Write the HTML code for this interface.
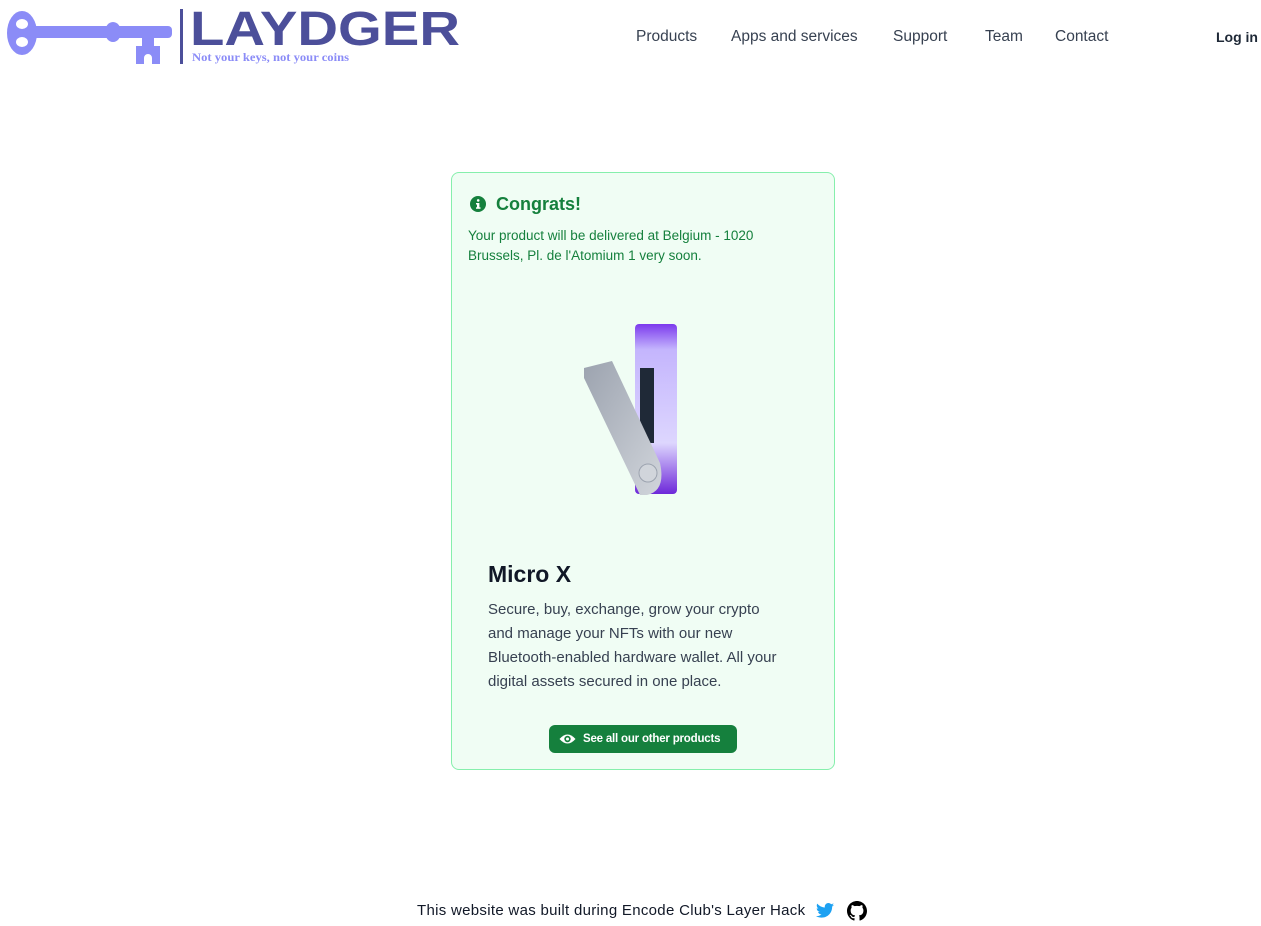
<!DOCTYPE html>
<html><head><meta charset="utf-8">
<style>
*{margin:0;padding:0;box-sizing:border-box}
body{width:1261px;height:926px;background:#fff;font-family:"Liberation Sans",sans-serif;position:relative;overflow:hidden;color:#111827}
.nav a{position:absolute;top:28px;font-size:15.5px;color:#374151;text-decoration:none}
.card{position:absolute;left:451px;top:172px;width:384px;height:598px;border:1px solid #86efac;border-radius:8px;background:#f0fdf4}
</style></head><body>
<svg style="position:absolute;left:0;top:0" width="470" height="70">
 <g fill="#8b8cf7">
  <ellipse cx="22" cy="33" rx="15" ry="22"/>
  <rect x="30" y="26" width="142" height="12" rx="4"/>
  <ellipse cx="113" cy="32" rx="8" ry="10"/>
  <path d="M136 32 h24 v4 h-6 v10 h6 v18 h-8 v-6 a4 4 0 0 0 -8 0 v6 h-8 v-18 h6 v-10 h-6z"/>
 </g>
 <ellipse cx="22" cy="24" rx="6" ry="5" fill="#fff"/>
 <ellipse cx="22" cy="42" rx="6" ry="5" fill="#fff"/>
 <rect x="180" y="9" width="3" height="55" fill="#4c4f9a"/>
 <text x="190" y="45" font-family="Liberation Sans,sans-serif" font-weight="bold" font-size="48" fill="#4c4f9a" textLength="270" lengthAdjust="spacingAndGlyphs">LAYDGER</text>
 <text x="192" y="61" font-family="Liberation Serif,serif" font-weight="bold" font-size="12" fill="#8b8cf7" textLength="157" lengthAdjust="spacingAndGlyphs">Not your keys, not your coins</text>
</svg>
<div class="nav">
 <a style="left:636px">Products</a>
 <a style="left:731px">Apps and services</a>
 <a style="left:893px">Support</a>
 <a style="left:985px">Team</a>
 <a style="left:1055px">Contact</a>
 <a style="left:1216px;font-size:14px;font-weight:bold;color:#1f2937;top:29px">Log in</a>
</div>
<div class="card">
 <svg style="position:absolute;left:17px;top:22px" width="18" height="18" viewBox="0 0 18 18"><circle cx="9" cy="9" r="8" fill="#15803d"/><rect x="8" y="8" width="2.4" height="5.5" fill="#fff"/><rect x="7" y="8" width="2" height="1.5" fill="#fff"/><rect x="7" y="12.3" width="4.5" height="1.5" fill="#fff"/><circle cx="9.2" cy="5.4" r="1.3" fill="#fff"/></svg>
 <div style="position:absolute;left:44px;top:21px;font-size:18px;font-weight:bold;color:#15803d">Congrats!</div>
 <div style="position:absolute;left:16px;top:53px;width:330px;font-size:13.5px;line-height:20px;color:#15803d">Your product will be delivered at Belgium - 1020<br>Brussels, Pl. de l'Atomium 1 very soon.</div>
 <svg style="position:absolute;left:110px;top:140px" width="160" height="200">
  <defs>
   <linearGradient id="p" x1="0" y1="0" x2="0" y2="1"><stop offset="0" stop-color="#7c3aed"/><stop offset=".15" stop-color="#c4b5fd"/><stop offset=".7" stop-color="#ddd6fe"/><stop offset="1" stop-color="#6d28d9"/></linearGradient>
   <linearGradient id="g" x1="0" y1="0" x2="1" y2="1"><stop offset="0" stop-color="#9ca3af"/><stop offset="1" stop-color="#d1d5db"/></linearGradient>
  </defs>
  <rect x="73" y="11" width="42" height="170" rx="4" fill="url(#p)"/>
  <rect x="78" y="55" width="14" height="75" fill="#1f2937"/>
  <path d="M22 55 L50 48 L98 150 Q104 178 85 182 L78 182 L22 65Z" fill="url(#g)"/>
  <circle cx="86" cy="160" r="9" fill="#d1d5db" stroke="#9ca3af"/>
 </svg>
 <div style="position:absolute;left:36px;top:388px;font-size:23px;font-weight:bold;color:#111827">Micro X</div>
 <div style="position:absolute;left:36px;top:425px;width:340px;font-size:15px;line-height:24px;color:#374151">Secure, buy, exchange, grow your crypto<br>and manage your NFTs with our new<br>Bluetooth-enabled hardware wallet. All your<br>digital assets secured in one place.</div>
 <div style="position:absolute;left:97px;top:552px;width:188px;height:28px;background:#15803d;border-radius:6px;color:#fff;font-size:11.5px;font-weight:bold;line-height:28px;padding-left:34px;letter-spacing:-0.2px">See all our other products
  <svg style="position:absolute;left:10px;top:8px" width="17" height="12" viewBox="0 0 17 12"><path d="M0.5 6 Q8.5 -3 16.5 6 Q8.5 15 0.5 6Z" fill="#fff"/><circle cx="8.5" cy="6" r="3.2" fill="#15803d"/><circle cx="8.5" cy="6" r="1.5" fill="#fff"/></svg>
 </div>
</div>
<div style="position:absolute;left:417px;top:902px;font-size:15px;color:#111827;letter-spacing:0.3px">This website was built during Encode Club's Layer Hack</div>
<svg style="position:absolute;left:816px;top:903px" width="18" height="15" viewBox="0 0 24 20"><path d="M24 2.4c-.9.4-1.8.7-2.8.8 1-.6 1.8-1.6 2.2-2.7-1 .6-2 1-3.1 1.2C19.3.7 18 0 16.6 0c-2.7 0-4.9 2.2-4.9 4.9 0 .4 0 .8.1 1.1C7.700 5.8 4.1 3.9 1.7.9c-.4.7-.7 1.6-.7 2.5 0 1.7.9 3.2 2.2 4.1-.8 0-1.6-.2-2.2-.6v.1c0 2.4 1.7 4.4 3.9 4.8-.4.1-.8.2-1.3.2-.3 0-.6 0-.9-.1.6 2 2.4 3.4 4.6 3.4-1.7 1.3-3.8 2.1-6.1 2.1-.4 0-.8 0-1.2-.1 2.2 1.4 4.8 2.2 7.5 2.2 9.1 0 14-7.5 14-14v-.6c1-.7 1.8-1.6 2.5-2.5z" fill="#1da1f2"/></svg>
<svg style="position:absolute;left:847px;top:901px" width="20" height="20" viewBox="0 0 16 16"><path fill="#000" d="M8 0C3.58 0 0 3.58 0 8c0 3.54 2.29 6.53 5.470 7.59.4.07.55-.17.55-.38 0-.19-.01-.82-.01-1.49-2.01.37-2.53-.49-2.69-.94-.09-.23-.48-.94-.82-1.13-.28-.15-.68-.52-.01-.53.63-.01 1.08.58 1.23.82.72 1.21 1.87.87 2.33.66.07-.52.28-.87.51-1.07-1.78-.2-3.64-.89-3.64-3.95 0-.87.31-1.59.82-2.15-.08-.2-.36-1.020.08-2.12 0 0 .67-.21 2.2.82.64-.18 1.32-.27 2-.27.68 0 1.36.09 2 .27 1.53-1.04 2.2-.82 2.2-.82.44 1.1.16 1.92.08 2.12.51.56.82 1.27.82 2.15 0 3.07-1.87 3.75-3.65 3.95.29.25.54.73.54 1.48 0 1.07-.01 1.93-.01 2.2 0 .21.15.46.55.38A8.013 8.013 0 0016 8c0-4.42-3.58-8-8-8z"/></svg>
</body></html>
